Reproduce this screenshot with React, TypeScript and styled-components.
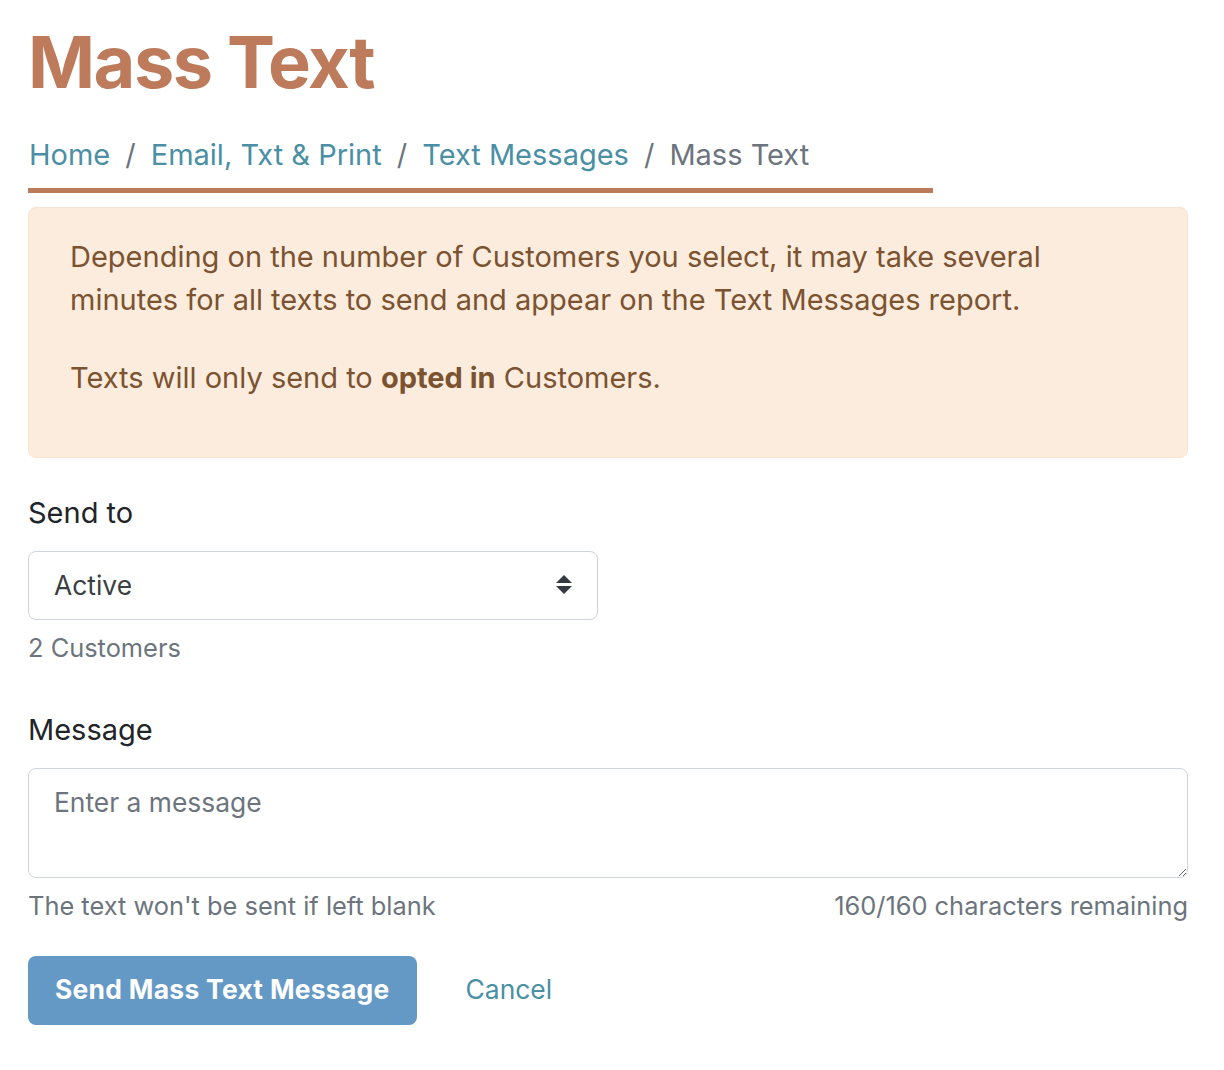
import React from 'react'
import styled, { createGlobalStyle } from 'styled-components'

const GlobalStyle = createGlobalStyle`
  * { box-sizing: border-box; }
  body {
    margin: 0;
    background: #fff;
    font-family: Inter, "Noto Sans", "Liberation Sans", sans-serif;
    font-size: 29px;
    line-height: 1.5;
    color: #212529;
  }
`

const Page = styled.div`
  width: 1160px;
  margin-left: 28px;
  padding-top: 19px;
`

const Title = styled.h1`
  margin: 0 0 28px;
  font-size: 72px;
  line-height: 1.2;
  font-weight: 700;
  color: #bd7b5b;
  letter-spacing: -1.5px;
`

const Crumbs = styled.nav`
  display: flex;
  align-items: center;
  width: 905px;
  padding-bottom: 11px;
  border-bottom: 5px solid #bd7b5b;
`

const Crumb = styled.a<{ active?: boolean }>`
  color: ${(p) => (p.active ? '#6c757d' : '#4a8fa4')};
  text-decoration: none;
  &:first-child { margin-left: 1px; }
`

const Sep = styled.span`
  color: #6c757d;
  padding: 0 15px;
`

const Alert = styled.div`
  margin-top: 14px;
  padding: 27px 41px 24px;
  background: #fcecde;
  border: 1px solid #fbe2cd;
  border-radius: 8px;
  color: #7b5330;

  p { margin: 0 0 34px; }
  b { font-weight: 700; }
`

const Field = styled.div<{ gap?: number }>`
  margin-top: ${(p) => p.gap ?? 0}px;
`

const Label = styled.label`
  display: block;
  margin-bottom: 16px;
  color: #212529;
`

const SelectWrap = styled.div`
  position: relative;
  width: 570px;
`

const Select = styled.select`
  appearance: none;
  width: 100%;
  height: 69px;
  padding: 0 60px 0 25px;
  font: inherit;
  font-size: 26.4px;
  color: #3a3f44;
  background: #fff;
  border: 1px solid #ced4da;
  border-radius: 8px;
  outline: none;
`

const Arrows = styled.svg`
  position: absolute;
  right: 26px;
  top: 50%;
  transform: translateY(-50%);
  pointer-events: none;
`

const Hint = styled.div`
  margin-top: 9px;
  font-size: 25.4px;
  line-height: 1.5;
  color: #6c757d;
`

const TextArea = styled.textarea`
  display: block;
  width: 100%;
  height: 110px;
  padding: 14px 25px;
  font: inherit;
  font-size: 26.4px;
  color: #3a3f44;
  border: 1px solid #ced4da;
  border-radius: 8px;
  resize: vertical;
  outline: none;

  &::placeholder { color: #6c757d; }
`

const HintRow = styled(Hint)`
  display: flex;
  justify-content: space-between;
`

const Actions = styled.div`
  display: flex;
  align-items: center;
  margin-top: 31px;
`

const SubmitButton = styled.button`
  height: 69px;
  padding: 0 27px;
  font: inherit;
  font-size: 26.4px;
  font-weight: 700;
  letter-spacing: 0.3px;
  color: #fff;
  background: #6499c6;
  border: none;
  border-radius: 8px;
`

const CancelLink = styled.a`
  margin-left: 49px;
  font-size: 26.4px;
  color: #4a8fa4;
  text-decoration: none;
`

export default function App() {
  return (
    <Page>
      <GlobalStyle />
      <Title>Mass Text</Title>
      <Crumbs>
        <Crumb href="#">Home</Crumb>
        <Sep>/</Sep>
        <Crumb href="#">Email, Txt &amp; Print</Crumb>
        <Sep>/</Sep>
        <Crumb href="#">Text Messages</Crumb>
        <Sep>/</Sep>
        <Crumb active>Mass Text</Crumb>
      </Crumbs>
      <Alert>
        <p>
          Depending on the number of Customers you select, it may take several
          minutes for all texts to send and appear on the Text Messages report.
        </p>
        <p>
          Texts will only send to <b>opted in</b> Customers.
        </p>
      </Alert>

      <Field gap={33}>
        <Label>Send to</Label>
        <SelectWrap>
          <Select defaultValue="active">
            <option value="active">Active</option>
            <option value="all">All</option>
          </Select>
          <Arrows width="16" height="20" viewBox="0 0 16 20">
            <path d="M8 0 L16 8 H0 Z" fill="#343a40" />
            <path d="M0 11 H16 L8 19 Z" fill="#343a40" />
          </Arrows>
        </SelectWrap>
        <Hint>2 Customers</Hint>
      </Field>

      <Field gap={41}>
        <Label>Message</Label>
        <TextArea placeholder="Enter a message" />
        <HintRow>
          <span>The text won't be sent if left blank</span>
          <span>160/160 characters remaining</span>
        </HintRow>
      </Field>

      <Actions>
        <SubmitButton>Send Mass Text Message</SubmitButton>
        <CancelLink href="#">Cancel</CancelLink>
      </Actions>
    </Page>
  )
}
